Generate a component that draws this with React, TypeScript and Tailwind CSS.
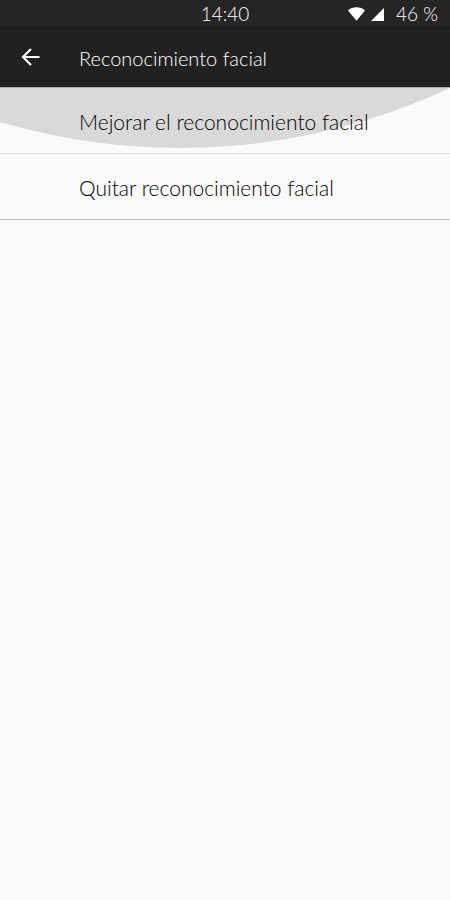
interface Option {
  id: string;
  label: string;
  pressed?: boolean;
}

const options: Option[] = [
  { id: 'improve', label: 'Mejorar el reconocimiento facial', pressed: true },
  { id: 'remove', label: 'Quitar reconocimiento facial' },
];

const StatusBar = () => (
  <div className="grid h-[26px] grid-cols-3 items-center bg-[#252525] px-3 pt-0.5 text-[19px] leading-6">
    <time className="col-start-2 text-center">14:40</time>
    <div className="flex items-center justify-end">
      <svg viewBox="0 0 17 14" className="mr-1.5 h-3.5 w-[17px] shrink-0" fill="currentColor" aria-hidden="true">
        <path d="M0 3.4C2.3 1.3 5.2.2 8.5.2s6.200 1.100 8.500 3.200L8.500 13.800z" />
      </svg>
      <svg viewBox="0 0 13 13" className="mr-3 size-[13px] shrink-0" fill="currentColor" aria-hidden="true">
        <path d="M13 0v13H0z" />
      </svg>
      <span className="whitespace-nowrap">46 %</span>
    </div>
  </div>
);

const AppBar = () => (
  <header className="flex h-[61px] items-center bg-[#212121]">
    <button type="button" aria-label="Atrás" className="w-[79px] pl-[21px]">
      <svg viewBox="0 0 19 18" className="h-[18px] w-[19px]" fill="none" stroke="currentColor" strokeWidth="2.2" aria-hidden="true">
        <path d="M18.500 9H2M10 1L2 9l8 8" />
      </svg>
    </button>
    <h1 className="pt-0.5 text-xl">Reconocimiento facial</h1>
  </header>
);

// The ripple is part of a large circle, clipped by its row
const Ripple = () => (
  <svg className="pointer-events-none absolute inset-0 size-full" aria-hidden="true">
    <circle cx="180" cy="-577" r="637" fill="#d9d9d9" />
  </svg>
);

const OptionRow = ({ option }: { option: Option }) => (
  <li className="border-b border-[#dcdcdc] last:border-[#bebebe]">
    <button type="button" className="relative block h-[65px] w-full overflow-hidden pt-0.5 pl-[79px] text-left text-[21px]">
      {option.pressed && <Ripple />}
      <span className="relative">{option.label}</span>
    </button>
  </li>
);

export default function App() {
  return (
    <div className="min-h-screen bg-[#fafafa] font-['Lato',sans-serif] font-light text-black">
      <div className="border-b border-[#b0b0b0] text-white">
        <StatusBar />
        <AppBar />
      </div>
      <main>
        <ul>
          {options.map((option) => (
            <OptionRow key={option.id} option={option} />
          ))}
        </ul>
      </main>
    </div>
  );
}
